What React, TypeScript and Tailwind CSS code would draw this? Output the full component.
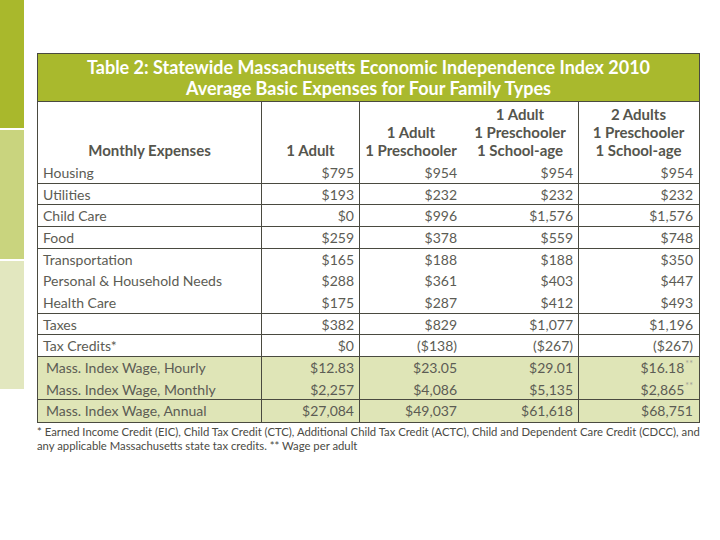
const rows: { label: string; v: string[]; line: boolean; wage?: boolean; star?: boolean }[] = [
  { label: "Housing", v: ["$795", "$954", "$954", "$954"], line: true },
  { label: "Utilities", v: ["$193", "$232", "$232", "$232"], line: true },
  { label: "Child Care", v: ["$0", "$996", "$1,576", "$1,576"], line: true },
  { label: "Food", v: ["$259", "$378", "$559", "$748"], line: true },
  { label: "Transportation", v: ["$165", "$188", "$188", "$350"], line: false },
  { label: "Personal & Household Needs", v: ["$288", "$361", "$403", "$447"], line: false },
  { label: "Health Care", v: ["$175", "$287", "$412", "$493"], line: true },
  { label: "Taxes", v: ["$382", "$829", "$1,077", "$1,196"], line: true },
  { label: "Tax Credits*", v: ["$0", "($138)", "($267)", "($267)"], line: true },
  { label: "Mass. Index Wage, Hourly", v: ["$12.83", "$23.05", "$29.01", "$16.18"], line: false, wage: true, star: true },
  { label: "Mass. Index Wage, Monthly", v: ["$2,257", "$4,086", "$5,135", "$2,865"], line: true, wage: true, star: true },
  { label: "Mass. Index Wage, Annual", v: ["$27,084", "$49,037", "$61,618", "$68,751"], line: false, wage: true },
];

const cols = "grid grid-cols-[224px_98px_102px_117px_119px]";

export default function App() {
  return (
    <div className="w-[720px] h-[540px] bg-white flex font-['Lato',sans-serif] text-[#5c5c54]">
      <div className="w-[24px] flex flex-col gap-[2px]">
        <div className="h-[128px] bg-[#a9b82c]" />
        <div className="h-[129px] bg-[#c9d47e]" />
        <div className="h-[128px] bg-[#e2e7bf]" />
      </div>

      <div className="ml-[13px] mt-[53px] w-[663px]">
        <div className="border border-[#4a4a40]">
          <div className="h-[47px] bg-[#a9b92d] text-white font-bold text-[18px] leading-[21px] text-center pt-[3px]">
            <div>Table 2: Statewide Massachusetts Economic Independence Index 2010</div>
            <div>Average Basic Expenses for Four Family Types</div>
          </div>

          <div className={`${cols} h-[61px] font-bold text-[15px] leading-[18px] text-[#55554d] border-t border-[#4a4a40]`}>
            <div className="border-r border-[#4a4a40] flex items-end justify-center pb-[3px]">Monthly Expenses</div>
            <div className="border-r border-[#4a4a40] flex items-end justify-center pb-[3px]">1 Adult</div>
            <div className="flex flex-col items-center justify-end pb-[3px]">
              <span>1 Adult</span>
              <span>1 Preschooler</span>
            </div>
            <div className="border-r border-[#4a4a40] flex flex-col items-center justify-end pb-[3px]">
              <span>1 Adult</span>
              <span>1 Preschooler</span>
              <span>1 School-age</span>
            </div>
            <div className="flex flex-col items-center justify-end pb-[3px]">
              <span>2 Adults</span>
              <span>1 Preschooler</span>
              <span>1 School-age</span>
            </div>
          </div>

          {rows.map((r, i) => (
            <div
              key={r.label}
              className={`${cols} h-[21.67px] text-[14px] leading-[21px] ${r.wage ? "bg-[#dfe5b7]" : ""} ${r.line && i < rows.length - 1 ? "border-b border-[#4a4a40]" : ""}`}
            >
              <div className={`border-r border-[#4a4a40] ${r.wage ? "pl-[8px]" : "pl-[5px]"}`}>{r.label}</div>
              <div className="border-r border-[#4a4a40] text-right pr-[5px]">{r.v[0]}</div>
              <div className="text-right pr-[5px]">{r.v[1]}</div>
              <div className="border-r border-[#4a4a40] text-right pr-[5px]">{r.v[2]}</div>
              <div className="text-right pr-[5px]">
                {r.v[3]}
                {r.star && <span className="ml-[1px] text-[9px] text-[#a0a096] align-top leading-[14px]">**</span>}
              </div>
            </div>
          ))}
        </div>

        <div className="mt-[2px] text-[11.3px] leading-[14px] text-[#4a4a44] whitespace-nowrap">
          <div>* Earned Income Credit (EIC), Child Tax Credit (CTC), Additional Child Tax Credit (ACTC), Child and Dependent Care Credit (CDCC), and</div>
          <div>any applicable Massachusetts state tax credits. ** Wage per adult</div>
        </div>
      </div>
    </div>
  );
}
